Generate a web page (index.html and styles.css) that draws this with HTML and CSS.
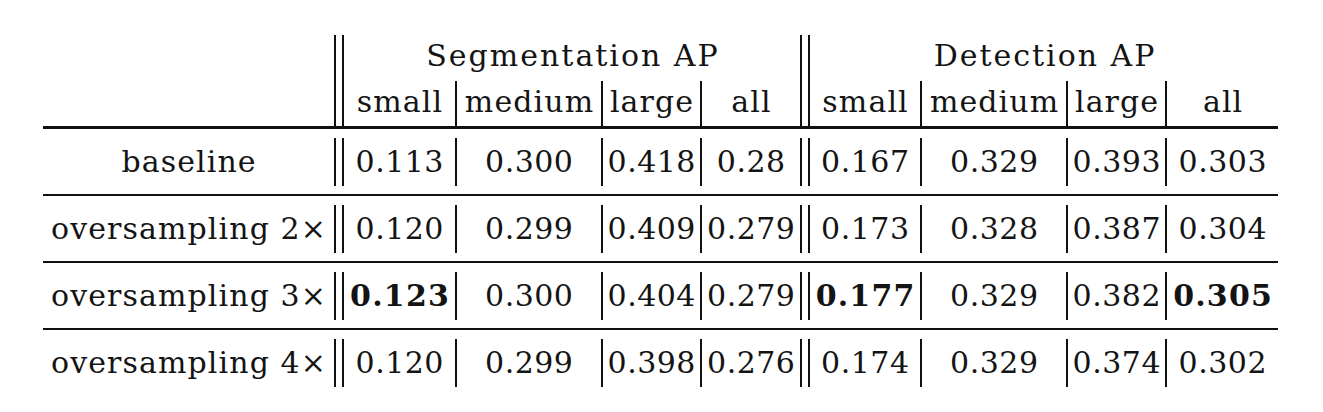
FILE: index.html
```html
<!DOCTYPE html>
<html lang="en">
<head>
    <meta charset="UTF-8">
    <title>Oversampling results</title>
    <link rel="stylesheet" href="styles.css">
</head>
<body>

<table class="results">
    <colgroup>
        <col class="w-label">
        <col class="w-sep">
        <col class="w-small">
        <col class="w-medium">
        <col class="w-large">
        <col class="w-all">
        <col class="w-sep">
        <col class="w-small2">
        <col class="w-medium">
        <col class="w-large">
        <col class="w-all2">
    </colgroup>
    <thead>
        <tr class="group-row">
            <th><div class="cell"></div></th>
            <th class="sep"><div class="cell dbl"></div></th>
            <th colspan="4"><div class="cell text wide">Segmentation AP</div></th>
            <th class="sep"><div class="cell dbl"></div></th>
            <th colspan="4"><div class="cell text wide">Detection AP</div></th>
        </tr>
        <tr class="sub-row">
            <th><div class="cell"></div></th>
            <th class="sep"><div class="cell dbl"></div></th>
            <th><div class="cell text">small</div></th>
            <th><div class="cell text ruled">medium</div></th>
            <th><div class="cell text ruled">large</div></th>
            <th><div class="cell text ruled">all</div></th>
            <th class="sep"><div class="cell dbl"></div></th>
            <th><div class="cell text">small</div></th>
            <th><div class="cell text ruled">medium</div></th>
            <th><div class="cell text ruled">large</div></th>
            <th><div class="cell text ruled">all</div></th>
        </tr>
    </thead>
    <tbody>
        <tr>
            <td><div class="cell text">baseline</div></td>
            <td class="sep"><div class="cell dbl"></div></td>
            <td><div class="cell num">0.113</div></td>
            <td><div class="cell num ruled">0.300</div></td>
            <td><div class="cell num ruled">0.418</div></td>
            <td><div class="cell num ruled">0.28</div></td>
            <td class="sep"><div class="cell dbl"></div></td>
            <td><div class="cell num">0.167</div></td>
            <td><div class="cell num ruled">0.329</div></td>
            <td><div class="cell num ruled">0.393</div></td>
            <td><div class="cell num ruled">0.303</div></td>
        </tr>
        <tr>
            <td><div class="cell text">oversampling 2×</div></td>
            <td class="sep"><div class="cell dbl"></div></td>
            <td><div class="cell num">0.120</div></td>
            <td><div class="cell num ruled">0.299</div></td>
            <td><div class="cell num ruled">0.409</div></td>
            <td><div class="cell num ruled">0.279</div></td>
            <td class="sep"><div class="cell dbl"></div></td>
            <td><div class="cell num">0.173</div></td>
            <td><div class="cell num ruled">0.328</div></td>
            <td><div class="cell num ruled">0.387</div></td>
            <td><div class="cell num ruled">0.304</div></td>
        </tr>
        <tr>
            <td><div class="cell text">oversampling 3×</div></td>
            <td class="sep"><div class="cell dbl"></div></td>
            <td><div class="cell num best">0.123</div></td>
            <td><div class="cell num ruled">0.300</div></td>
            <td><div class="cell num ruled">0.404</div></td>
            <td><div class="cell num ruled">0.279</div></td>
            <td class="sep"><div class="cell dbl"></div></td>
            <td><div class="cell num best">0.177</div></td>
            <td><div class="cell num ruled">0.329</div></td>
            <td><div class="cell num ruled">0.382</div></td>
            <td><div class="cell num ruled best">0.305</div></td>
        </tr>
        <tr class="last-row">
            <td><div class="cell text">oversampling 4×</div></td>
            <td class="sep"><div class="cell dbl"></div></td>
            <td><div class="cell num">0.120</div></td>
            <td><div class="cell num ruled">0.299</div></td>
            <td><div class="cell num ruled">0.398</div></td>
            <td><div class="cell num ruled">0.276</div></td>
            <td class="sep"><div class="cell dbl"></div></td>
            <td><div class="cell num">0.174</div></td>
            <td><div class="cell num ruled">0.329</div></td>
            <td><div class="cell num ruled">0.374</div></td>
            <td><div class="cell num ruled">0.302</div></td>
        </tr>
    </tbody>
</table>

</body>
</html>
```

FILE: styles.css
```css
* {
    margin: 0;
    padding: 0;
    box-sizing: border-box;
}

body {
    background: #ffffff;
    color: #141414;
    font-family: "DejaVu Serif", serif;
    font-size: 30px;
}

/* LaTeX-style results table */
.results {
    margin: 35px 0 0 43px;
    width: 1235px;
    table-layout: fixed;
    border-collapse: separate;
    border-spacing: 0;
}

.w-label { width: 291px; }
.w-sep { width: 10px; }
.w-small { width: 111px; }
.w-small2 { width: 110px; }
.w-medium { width: 146px; }
.w-large { width: 99px; }
.w-all { width: 100px; }
.w-all2 { width: 113px; }

.results th,
.results td {
    padding: 0;
    font-family: inherit;
    font-weight: normal;
    text-align: center;
    vertical-align: top;
    white-space: nowrap;
}

.cell {
    text-align: center;
}

.text {
    letter-spacing: 1.1px;
    text-indent: 1.1px;
}

.text.wide {
    letter-spacing: 2px;
    text-indent: 2px;
}

.num {
    letter-spacing: 0.5px;
    text-indent: 0.5px;
}

.best {
    font-weight: bold;
    letter-spacing: 1.2px;
    text-indent: 1.2px;
}

.ruled {
    border-left: 2px solid #111111;
}

.dbl {
    border-left: 2px solid #111111;
    border-right: 2px solid #111111;
}

/* header rows: rules run the full height */
.group-row .cell {
    height: 46px;
    line-height: 41px;
}

.sub-row .cell {
    height: 45px;
    line-height: 41px;
}

.sub-row th {
    border-bottom: 3px solid #111111;
}

/* body rows: vertical rules stop short of the horizontal ones */
tbody .cell {
    height: 48px;
    margin: 9px 0 8px;
    line-height: 48px;
}

tbody tr td {
    border-bottom: 2px solid #111111;
}

tbody tr.last-row td {
    border-bottom: none;
}
```
